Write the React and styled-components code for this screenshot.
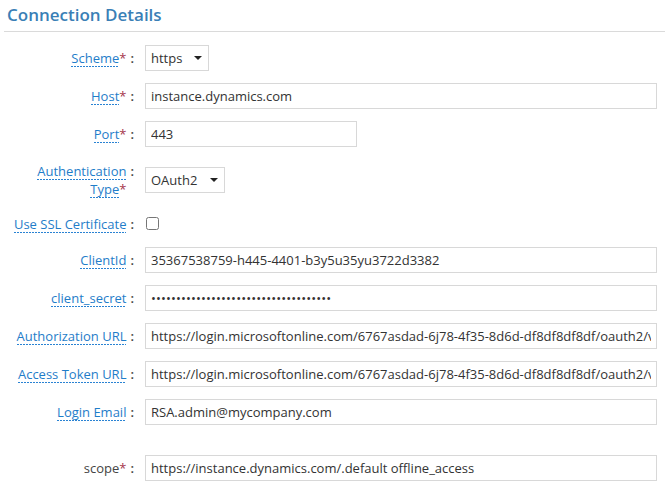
import React from "react";
import styled, { createGlobalStyle } from "styled-components";

const Global = createGlobalStyle`
  html, body { margin: 0; padding: 0; background: #fff; }
  body { font-family: "Open Sans", "Noto Sans", sans-serif; color: #333; }
  * { box-sizing: border-box; }
`;

const Panel = styled.section`
  width: 665px;
  padding-left: 4px;
`;

const Title = styled.h2`
  margin: 0;
  padding: 3px 3px 5px;
  font-size: 17px;
  line-height: 23px;
  font-weight: 600;
  color: #3a7fb6;
  border-bottom: 1px solid #dadada;
`;

const Form = styled.div`
  display: flex;
  flex-direction: column;
  gap: 12px;
  padding-top: 13px;
`;

const Row = styled.div`
  display: grid;
  grid-template-columns: 133px 1fr;
  column-gap: 8px;
  align-items: center;
  min-height: ${(p) => p.$min || 18}px;
  padding: ${(p) => (p.$tall ? "3px 0" : "0")};
  margin-top: ${(p) => (p.$spaced ? "18px" : "0")};
`;

const LabelCell = styled.div`
  display: flex;
  justify-content: flex-end;
  align-items: flex-start;
  padding-right: 3px;
  font-size: 13px;
  line-height: 18px;
`;

const LabelText = styled.div`
  max-width: 116px;
  text-align: right;
`;

const Term = styled.span`
  color: ${(p) => (p.$plain ? "#444" : "#1f7dc9")};
  background-image: ${(p) =>
    p.$plain
      ? "none"
      : "linear-gradient(to right, #2a83d3 0 2px, transparent 2px 3px)"};
  background-size: 3px 1px;
  background-repeat: repeat-x;
  background-position: left bottom;
`;

const Req = styled.span`
  color: #a4364c;
`;

const Colon = styled.span`
  margin-left: 4px;
  color: #444;
  font-weight: 600;
`;

const TextInput = styled.input`
  width: ${(p) => p.$w || 512}px;
  height: 26px;
  border: 1px solid #d8d8d8;
  border-radius: 0;
  padding: 0 5px;
  font-family: "Open Sans", "Noto Sans", sans-serif;
  font-size: 13px;
  color: #333;
  background: #fff;
  outline: none;
  letter-spacing: ${(p) => (p.type === "password" ? "0.12px" : "normal")};
`;

const SelectBox = styled.div`
  width: ${(p) => p.$w}px;
  height: 26px;
  border: 1px solid #d8d8d8;
  display: flex;
  align-items: center;
  justify-content: space-between;
  padding: 0 6px 0 5px;
  font-size: 13px;
  color: #333;
  background: #fff;
`;

const Caret = styled.span`
  width: 0;
  height: 0;
  border-left: 4px solid transparent;
  border-right: 4px solid transparent;
  border-top: 4px solid #222;
`;

const Check = styled.input`
  width: 13px;
  height: 13px;
  margin: 0 0 0 1px;
`;

function Label({ parts, req, plain }) {
  return (
    <LabelCell>
      <LabelText>
        {parts.map((t, i) => (
          <React.Fragment key={i}>
            {i > 0 ? " " : null}
            <Term $plain={plain}>{t}</Term>
          </React.Fragment>
        ))}
        {req ? <Req>*</Req> : null}
      </LabelText>
      <Colon>:</Colon>
    </LabelCell>
  );
}

const authUrl =
  "https://login.microsoftonline.com/6767asdad-6j78-4f35-8d6d-df8df8df8df/oauth2/v2.0/authorize";
const tokenUrl =
  "https://login.microsoftonline.com/6767asdad-6j78-4f35-8d6d-df8df8df8df/oauth2/v2.0/token";

export default function App() {
  return (
    <>
      <Global />
      <Panel>
        <Title>Connection Details</Title>
        <Form>
          <Row>
            <Label parts={["Scheme"]} req />
            <SelectBox $w={64}>
              https
              <Caret />
            </SelectBox>
          </Row>
          <Row>
            <Label parts={["Host"]} req />
            <TextInput readOnly value="instance.dynamics.com" />
          </Row>
          <Row>
            <Label parts={["Port"]} req />
            <TextInput readOnly $w={212} value="443" />
          </Row>
          <Row $tall>
            <Label parts={["Authentication", "Type"]} req />
            <SelectBox $w={80}>
              OAuth2
              <Caret />
            </SelectBox>
          </Row>
          <Row $min={19}>
            <Label parts={["Use SSL Certificate"]} />
            <div>
              <Check type="checkbox" readOnly />
            </div>
          </Row>
          <Row>
            <Label parts={["ClientId"]} />
            <TextInput readOnly value="35367538759-h445-4401-b3y5u35yu3722d3382" />
          </Row>
          <Row>
            <Label parts={["client_secret"]} />
            <TextInput readOnly type="password" value="abcdefghijklmnopqrstuvwxyz0123456789" />
          </Row>
          <Row>
            <Label parts={["Authorization URL"]} />
            <TextInput readOnly value={authUrl} />
          </Row>
          <Row>
            <Label parts={["Access Token URL"]} />
            <TextInput readOnly value={tokenUrl} />
          </Row>
          <Row>
            <Label parts={["Login Email"]} />
            <TextInput readOnly value="RSA.admin@mycompany.com" />
          </Row>
          <Row $spaced>
            <Label parts={["scope"]} req plain />
            <TextInput readOnly value="https://instance.dynamics.com/.default offline_access" />
          </Row>
        </Form>
      </Panel>
    </>
  );
}
